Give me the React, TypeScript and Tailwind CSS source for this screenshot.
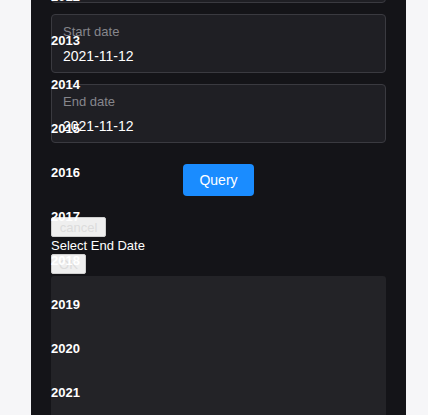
import React from "react";

const years = ["2012", "2013", "2014", "2015", "2016", "2017", "2018", "2019", "2020", "2021", "2022"];

function DateField({ label, value }: { label: string; value: string }) {
  return (
    <div className="h-[59px] rounded-[4px] border border-[#3a3a40] bg-[#1f1f24] px-[11px] pt-[8px]">
      <div className="text-[13px] leading-[18px] text-[#86868c]">{label}</div>
      <div className="mt-[5px] text-[14px] leading-[20px] text-white">{value}</div>
    </div>
  );
}

export default function App() {
  return (
    <div
      className="relative h-[415px] w-[428px] overflow-hidden bg-[#f6f6f8]"
      style={{ fontFamily: '"Liberation Sans", Arial, sans-serif' }}
    >
      <div className="ml-[31px] flex h-full w-[375px] flex-col bg-[#141418] px-5">
        <div className="-mt-[56px] h-[59px] shrink-0 rounded-[4px] border border-[#3a3a40] bg-[#1f1f24]" />
        <div className="mt-[11px] flex flex-col gap-[11px]">
          <DateField label="Start date" value="2021-11-12" />
          <DateField label="End date" value="2021-11-12" />
        </div>
        <div className="mt-[21px] flex justify-center">
          <button className="h-8 w-[71px] rounded-[4px] bg-[#1a8cff] text-[14px] text-white">Query</button>
        </div>
        <div className="mt-[21px] flex flex-col items-start">
          <button className="h-[20px] w-[55px] rounded-[2px] border border-[#cfcfcf] bg-[#efefef] text-[13px] leading-none text-[#dcdcdc]">
            cancel
          </button>
          <div className="text-[13px] leading-[17px] text-white">Select End Date</div>
          <button className="h-[20px] w-[35px] rounded-[2px] border border-[#cfcfcf] bg-[#efefef] text-[13px] leading-none text-[#dcdcdc]">
            OK
          </button>
        </div>
        <div className="mt-[2px] flex-1 rounded-t-[3px] bg-[#232327]" />
      </div>

      {/* year column overlay */}
      <div className="absolute left-[51px] top-[-25px] flex flex-col">
        {years.map((y) => (
          <div key={y} className="flex h-[44px] items-center text-[13px] font-bold text-white">
            {y}
          </div>
        ))}
      </div>
    </div>
  );
}
